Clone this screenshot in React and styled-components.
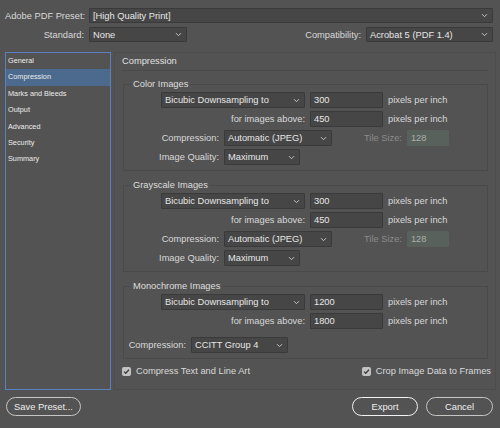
import React from 'react'
import styled, { createGlobalStyle } from 'styled-components'

const GlobalStyle = createGlobalStyle`
  html, body {
    margin: 0;
    padding: 0;
    background: #535353;
  }
  body {
    font-family: "Liberation Sans", Arial, sans-serif;
    font-size: 9.3px;
    color: #dadada;
  }
  * {
    box-sizing: border-box;
  }
`

const Page = styled.div`
    width: 500px;
    height: 428px;
    overflow: hidden;
    display: flex;
    flex-direction: column;
    padding-top: 8px;
`

const TopRow = styled.div`
    display: flex;
    align-items: center;
    gap: 5px;
    height: 15px;
    padding: 0 7px 0 5px;

    & + & {
        margin-top: 4px;
    }
`

const Label = styled.div`
    width: ${p => (p.$w !== undefined ? `${p.$w}px` : 'auto')};
    margin-left: ${p => p.$ml || 0}px;
    flex-shrink: 0;
    text-align: right;
    white-space: nowrap;
    color: ${p => (p.$disabled ? '#8b8b8b' : '#d9d9d9')};
`

const Spacer = styled.div`
    flex: 1;
`

const Field = styled.div`
    height: ${p => p.$h || 16}px;
    width: ${p => (p.$w ? `${p.$w}px` : 'auto')};
    flex: ${p => (p.$grow ? 1 : 'none')};
    display: flex;
    align-items: center;
    justify-content: space-between;
    padding: 0 4px 0 3px;
    white-space: nowrap;
    background: ${p => (p.$disabled ? '#59615c' : '#464646')};
    border: 1px solid ${p => (p.$disabled ? '#59615c' : '#3a3a3a')};
    border-radius: 1px;
    color: ${p => (p.$disabled ? '#a9aeab' : '#e6e6e6')};
`

const Chevron = styled.svg`
    width: 7px;
    height: 5px;
    flex-shrink: 0;
`

function Select({ value, ...rest }) {
    return (
        <Field {...rest}>
            <span>{value}</span>
            <Chevron viewBox="0 0 7 5">
                <path d="M1 1.2 L3.5 3.7 L6 1.2" fill="none" stroke="#c4c4c4" strokeWidth="1" />
            </Chevron>
        </Field>
    )
}

const Main = styled.div`
    display: flex;
    gap: 3px;
    height: 338px;
    margin-top: 10px;
    padding: 0 4px 0 5px;
`

const NavList = styled.ul`
    width: 106px;
    margin: 0;
    padding: 0;
    list-style: none;
    border: 1px solid #5b80c0;
`

const NavItem = styled.li`
    height: 16.4px;
    line-height: 16.4px;
    padding-left: 2px;
    font-size: 7.3px;
    color: #ececec;
    background: ${p => (p.$active ? '#4b6a8e' : 'transparent')};
`

const Panel = styled.section`
    flex: 1;
    display: flex;
    flex-direction: column;
    border: 1px solid #4c4c4c;
    padding: 2px 7px 0 8px;
`

const PanelTitle = styled.div`
    line-height: 12px;
    padding-bottom: 3px;
    margin-left: -1px;
    border-bottom: 1px solid #4a4a4a;
    color: #e0e0e0;
`

const Group = styled.fieldset`
    margin: 7px 0 0;
    padding: 2px 0 5px;
    min-width: 0;
    border: 1px solid #4a4a4a;

    & + & {
        margin-top: 8px;
    }
`

const Legend = styled.legend`
    margin-left: 7px;
    padding: 0 2px;
    line-height: 12px;
    color: #dedede;
`

const Row = styled.div`
    display: flex;
    align-items: center;
    gap: 5px;
    height: 16px;
    margin-top: ${p => p.$mt ?? 3}px;

    &:first-of-type {
        margin-top: 0;
    }
`

const Unit = styled.span`
    white-space: nowrap;
    color: #d9d9d9;
`

const CheckRow = styled.div`
    display: flex;
    align-items: center;
    justify-content: space-between;
    height: 12px;
    margin: 6px -3px 0 -1px;
`

const Check = styled.label`
    display: flex;
    align-items: center;
    gap: 5px;
    white-space: nowrap;
    color: #dadada;
`

const Box = styled.span`
    width: 9px;
    height: 9px;
    border-radius: 2px;
    background: #c2c2c2;
    display: flex;
    align-items: center;
    justify-content: center;
`

const Footer = styled.div`
    display: flex;
    align-items: center;
    gap: 8px;
    margin-top: 7px;
    padding: 0 7px 0 6px;
`

const Pill = styled.button`
    width: ${p => p.$w}px;
    height: 19px;
    padding: 0;
    border-radius: 10px;
    border: 1.5px solid ${p => (p.$primary ? '#f2f2f2' : '#c6c6c6')};
    background: transparent;
    color: #eeeeee;
    font: inherit;
    font-size: 9.4px;
`

function Checkbox({ label }) {
    return (
        <Check>
            <Box>
                <svg width="9" height="9" viewBox="0 0 9 9">
                    <path d="M2 4.6 L3.7 6.3 L7 2.7" fill="none" stroke="#3a3a3a" strokeWidth="1.3" />
                </svg>
            </Box>
            {label}
        </Check>
    )
}

function ImageGroup({ title, res, above }) {
    return (
        <Group>
            <Legend>{title}</Legend>
            <Row>
                <Label $w={32} />
                <Select $w={144} value="Bicubic Downsampling to" />
                <Field $w={73}>{res}</Field>
                <Unit>pixels per inch</Unit>
            </Row>
            <Row>
                <Label $w={181}>for images above:</Label>
                <Field $w={73}>{above}</Field>
                <Unit>pixels per inch</Unit>
            </Row>
            <Row>
                <Label $w={95}>Compression:</Label>
                <Select $w={108} value="Automatic (JPEG)" />
                <Label $ml={27} $disabled>Tile Size:</Label>
                <Field $w={42} $disabled>128</Field>
            </Row>
            <Row>
                <Label $w={95}>Image Quality:</Label>
                <Select $w={76} value="Maximum" />
            </Row>
        </Group>
    )
}

const navItems = ['General', 'Compression', 'Marks and Bleeds', 'Output', 'Advanced', 'Security', 'Summary']

export default function App() {
    return (
        <Page>
            <GlobalStyle />
            <TopRow>
                <Label $w={79}>Adobe PDF Preset:</Label>
                <Select $grow $h={15} value="[High Quality Print]" />
            </TopRow>
            <TopRow>
                <Label $w={79}>Standard:</Label>
                <Select $w={98} $h={15} value="None" />
                <Spacer />
                <Label>Compatibility:</Label>
                <Select $w={127} $h={15} value="Acrobat 5 (PDF 1.4)" />
            </TopRow>

            <Main>
                <NavList>
                    {navItems.map(item => (
                        <NavItem key={item} $active={item === 'Compression'}>{item}</NavItem>
                    ))}
                </NavList>
                <Panel>
                    <PanelTitle>Compression</PanelTitle>
                    <ImageGroup title="Color Images" res="300" above="450" />
                    <ImageGroup title="Grayscale Images" res="300" above="450" />
                    <Group>
                        <Legend>Monochrome Images</Legend>
                        <Row>
                            <Label $w={32} />
                            <Select $w={144} value="Bicubic Downsampling to" />
                            <Field $w={73}>1200</Field>
                            <Unit>pixels per inch</Unit>
                        </Row>
                        <Row>
                            <Label $w={181}>for images above:</Label>
                            <Field $w={73}>1800</Field>
                            <Unit>pixels per inch</Unit>
                        </Row>
                        <Row $mt={8}>
                            <Label $w={62}>Compression:</Label>
                            <Select $w={97} value="CCITT Group 4" />
                        </Row>
                    </Group>
                    <CheckRow>
                        <Checkbox label="Compress Text and Line Art" />
                        <Checkbox label="Crop Image Data to Frames" />
                    </CheckRow>
                </Panel>
            </Main>

            <Footer>
                <Pill $w={75}>Save Preset...</Pill>
                <Spacer />
                <Pill $w={66} $primary>Export</Pill>
                <Pill $w={67}>Cancel</Pill>
            </Footer>
        </Page>
    )
}
